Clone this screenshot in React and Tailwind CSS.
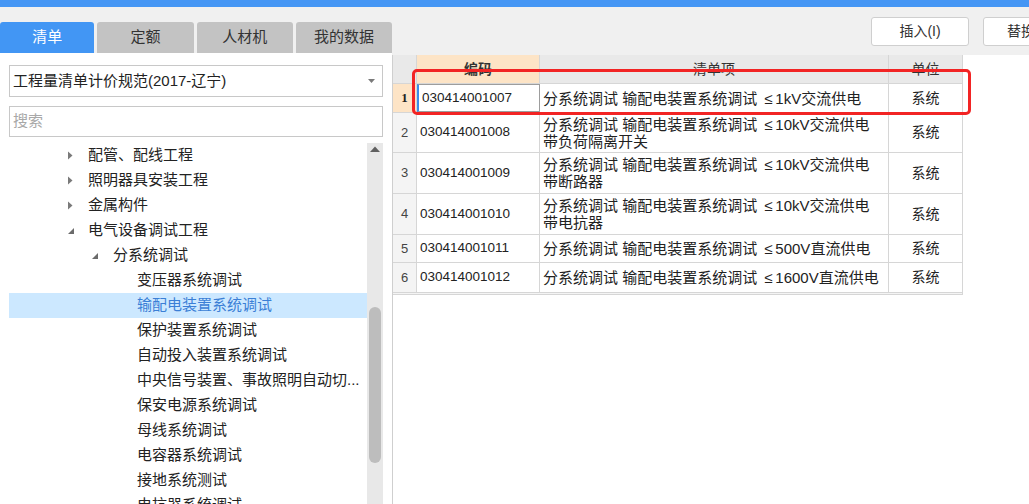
import React from "react";

const tabs = ["清单", "定额", "人材机", "我的数据"];

const tree = [
  { level: 1, icon: "closed", text: "配管、配线工程" },
  { level: 1, icon: "closed", text: "照明器具安装工程" },
  { level: 1, icon: "closed", text: "金属构件" },
  { level: 1, icon: "open", text: "电气设备调试工程" },
  { level: 2, icon: "open", text: "分系统调试" },
  { level: 3, text: "变压器系统调试" },
  { level: 3, text: "输配电装置系统调试", active: true },
  { level: 3, text: "保护装置系统调试" },
  { level: 3, text: "自动投入装置系统调试" },
  { level: 3, text: "中央信号装置、事故照明自动切..." },
  { level: 3, text: "保安电源系统调试" },
  { level: 3, text: "母线系统调试" },
  { level: 3, text: "电容器系统调试" },
  { level: 3, text: "接地系统测试" },
  { level: 3, text: "电抗器系统调试" },
];

const rows = [
  { n: 1, code: "030414001007", spec: "1kV交流供电", extra: null, h: "h-[29px]" },
  { n: 2, code: "030414001008", spec: "10kV交流供电", extra: "带负荷隔离开关", h: "h-[40px]" },
  { n: 3, code: "030414001009", spec: "10kV交流供电", extra: "带断路器", h: "h-[41px]" },
  { n: 4, code: "030414001010", spec: "10kV交流供电", extra: "带电抗器", h: "h-[41px]" },
  { n: 5, code: "030414001011", spec: "500V直流供电", extra: null, h: "h-[28px]" },
  { n: 6, code: "030414001012", spec: "1600V直流供电", extra: null, h: "h-[30px]" },
];

function Arrow({ open }) {
  return open ? (
    <svg width="8" height="8" viewBox="0 0 8 8">
      <path d="M7 1 L7 7 L1 7 Z" fill="#6b6b6b" />
    </svg>
  ) : (
    <svg width="6" height="9" viewBox="0 0 6 9">
      <path d="M1 0.5 L5.5 4.5 L1 8.5 Z" fill="#7a7a7a" />
    </svg>
  );
}

export default function App() {
  return (
    <div className="relative flex h-[504px] w-[1029px] flex-col overflow-hidden bg-[#f0f0f0] font-['Liberation_Sans','Noto_Sans_CJK_SC',sans-serif] text-[#222]">
      <div className="h-[7px] bg-[#4596f4]" />
      <div className="flex min-h-0 flex-1">
        {/* left */}
        <div className="flex w-[392px] flex-col">
          <div className="mt-[15px] flex h-[31px] gap-[3px]">
            {tabs.map((t, i) => (
              <div
                key={t}
                className={
                  i === 0
                    ? "flex w-[95px] items-center justify-center rounded-t-[3px] bg-[#4296f4] text-[15px] text-white"
                    : "flex w-[97px] items-center justify-center rounded-t-[3px] bg-[#c3c3c3] text-[15px] text-[#333]"
                }
              >
                {t}
              </div>
            ))}
          </div>
          <div className="flex min-h-0 flex-1 flex-col bg-white pl-[9px] pr-[9px] pt-[12px]">
            <div className="flex h-[32px] items-center justify-between border border-[#c8c8c8] pl-[3px] pr-[7px] text-[15px] text-[#222]">
              <span>工程量清单计价规范(2017-辽宁)</span>
              <svg width="7" height="4" viewBox="0 0 7 4">
                <path d="M0 0 L7 0 L3.5 4 Z" fill="#7a7a7a" />
              </svg>
            </div>
            <div className="mt-[9px] flex h-[31px] items-center border border-[#c8c8c8] pl-[3px] text-[15px] text-[#a8a8a8]">
              搜索
            </div>
            <div className="mt-[6px] flex min-h-0 flex-1">
              <div className="flex-1 overflow-hidden">
                {tree.map((r) => (
                  <div
                    key={r.text}
                    className={
                      "flex h-[25px] shrink-0 items-center text-[15px] " +
                      (r.active ? "bg-[#cce8ff] text-[#3b7fd6]" : "text-[#222]")
                    }
                  >
                    <div
                      className={
                        r.level === 1 ? "w-[79px] pl-[58px]" : r.level === 2 ? "w-[104px] pl-[82px]" : "w-[128px]"
                      }
                    >
                      {r.icon && <Arrow open={r.icon === "open"} />}
                    </div>
                    <span className="whitespace-nowrap">{r.text}</span>
                  </div>
                ))}
              </div>
              <div className="relative w-[16px] bg-[#e8e8e8]">
                <svg className="absolute left-[3px] top-[3px]" width="10" height="6" viewBox="0 0 10 6">
                  <path d="M0 6 L5 0.5 L10 6 Z" fill="#606060" />
                </svg>
                <div className="absolute left-[2px] top-[164px] h-[156px] w-[12px] rounded-[6px] bg-[#bdbdbd]" />
              </div>
            </div>
          </div>
        </div>
        {/* right */}
        <div className="flex flex-1 flex-col">
          <div className="flex h-[48px] shrink-0 items-start gap-[14px] pl-[479px] pt-[10px]">
            <div className="flex h-[29px] w-[98px] items-center justify-center rounded-[3px] border border-[#cfcfcf] bg-white text-[14px] text-[#333]">
              插入(I)
            </div>
            <div className="flex h-[29px] w-[98px] items-center justify-start rounded-[3px] border border-[#cfcfcf] bg-white pl-[23px] text-[14px] text-[#333]">
              替换
            </div>
          </div>
          <div className="flex-1 border-l border-[#cfcfcf] bg-white">
            <div className="w-[570px] border-b border-r border-[#d6d6d6] bg-[#f4f4f4] pb-[1px] text-[14px]">
              <div className="flex h-[29px] border-b border-[#d6d6d6] bg-[#e9e9e9] text-[14px] text-[#333]">
                <div className="w-[24px] border-r border-[#d6d6d6]" />
                <div className="flex w-[123px] items-center justify-center border-r border-[#d6d6d6] bg-[#fde4c6] font-bold">编码</div>
                <div className="flex w-[349px] items-center justify-center border-r border-[#d6d6d6]">清单项</div>
                <div className="flex flex-1 items-center justify-center">单位</div>
              </div>
              {rows.map((r) => (
                <div key={r.n} className={"flex border-b border-[#d6d6d6] bg-white " + r.h}>
                  <div
                    className={
                      "flex w-[24px] items-center justify-center border-r border-[#d6d6d6] text-[13px] " +
                      (r.n === 1 ? "bg-[#fde4c6] font-bold font-['Liberation_Serif',serif] text-[#222]" : "bg-[#f4f4f4] text-[#444]")
                    }
                  >
                    {r.n}
                  </div>
                  <div
                    className={
                      "flex w-[123px] items-center pl-[3px] text-[13.5px] " +
                      (r.n === 1
                        ? "border border-l-2 border-[#9d9d9d] border-l-[#3b8ee8]"
                        : "border-r border-[#d6d6d6]")
                    }
                  >
                    {r.code}
                  </div>
                  <div className="flex w-[349px] flex-col justify-center border-r border-[#d6d6d6] pl-[3px] text-[15px] leading-[17px]">
                    <span className="whitespace-pre">
                      分系统调试 输配电装置系统调试 <span className="inline-block w-[14px] text-center">≤</span>
                      {r.spec}
                    </span>
                    {r.extra && <span className="whitespace-nowrap">{r.extra}</span>}
                  </div>
                  <div className="flex flex-1 items-center justify-center">系统</div>
                </div>
              ))}
            </div>
          </div>
        </div>
      </div>
      <div className="pointer-events-none absolute left-[412px] top-[69px] h-[46px] w-[559px] rounded-[5px] border-[3px] border-[#f22424]" />
    </div>
  );
}
